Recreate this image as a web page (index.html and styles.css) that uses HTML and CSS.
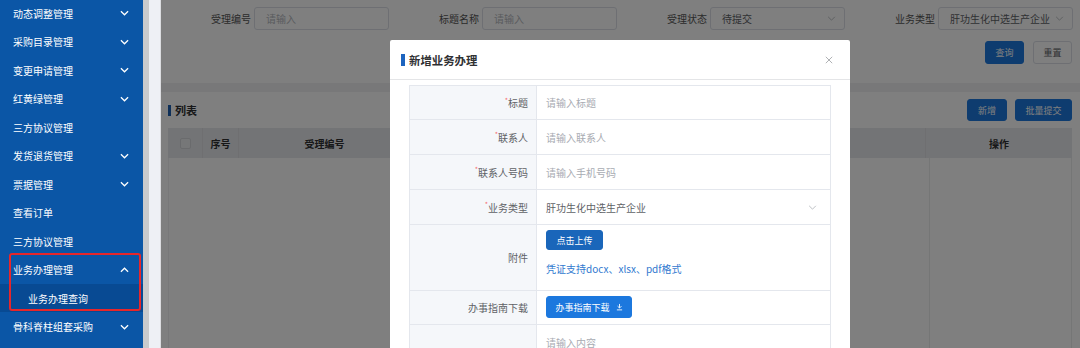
FILE: index.html
```html
<!DOCTYPE html>
<html lang="zh-CN">
<head>
    <meta charset="UTF-8">
    <meta name="viewport" content="width=device-width, initial-scale=1.0">
    <title>业务办理查询</title>
    <link rel="stylesheet" href="styles.css">
</head>
<body>
    <div class="app">
        <!-- Sidebar -->
        <aside class="sidebar">
            <ul class="menu">
                <li class="menu-item"><span>动态调整管理</span><svg class="arrow" viewBox="0 0 10 6"><polyline points="1,1 5,5 9,1"/></svg></li>
                <li class="menu-item"><span>采购目录管理</span><svg class="arrow" viewBox="0 0 10 6"><polyline points="1,1 5,5 9,1"/></svg></li>
                <li class="menu-item"><span>变更申请管理</span><svg class="arrow" viewBox="0 0 10 6"><polyline points="1,1 5,5 9,1"/></svg></li>
                <li class="menu-item"><span>红黄绿管理</span><svg class="arrow" viewBox="0 0 10 6"><polyline points="1,1 5,5 9,1"/></svg></li>
                <li class="menu-item"><span>三方协议管理</span></li>
                <li class="menu-item"><span>发货退货管理</span><svg class="arrow" viewBox="0 0 10 6"><polyline points="1,1 5,5 9,1"/></svg></li>
                <li class="menu-item"><span>票据管理</span><svg class="arrow" viewBox="0 0 10 6"><polyline points="1,1 5,5 9,1"/></svg></li>
                <li class="menu-item"><span>查看订单</span></li>
                <li class="menu-item"><span>三方协议管理</span></li>
                <li class="menu-item"><span>业务办理管理</span><svg class="arrow" viewBox="0 0 10 6"><polyline points="1,5 5,1 9,5"/></svg></li>
                <li class="menu-item sub"><span>业务办理查询</span></li>
                <li class="menu-item"><span>骨科脊柱组套采购</span><svg class="arrow" viewBox="0 0 10 6"><polyline points="1,1 5,5 9,1"/></svg></li>
            </ul>
            <!-- annotation box -->
            <div class="mark"></div>
        </aside>
        <div class="scroll-track"></div>
        <div class="gutter"></div>

        <!-- Main -->
        <main class="main">
            <section class="search-card">
                <div class="search-grid">
                    <div class="form-item">
                        <label>受理编号</label>
                        <div class="input placeholder">请输入</div>
                    </div>
                    <div class="form-item">
                        <label>标题名称</label>
                        <div class="input placeholder">请输入</div>
                    </div>
                    <div class="form-item">
                        <label>受理状态</label>
                        <div class="input select"><span>待提交</span><svg class="caret" viewBox="0 0 10 6"><polyline points="1,1 5,5 9,1"/></svg></div>
                    </div>
                    <div class="form-item">
                        <label>业务类型</label>
                        <div class="input select"><span>肝功生化中选生产企业</span><svg class="caret" viewBox="0 0 10 6"><polyline points="1,1 5,5 9,1"/></svg></div>
                    </div>
                </div>
                <div class="search-actions">
                    <button class="btn primary">查询</button>
                    <button class="btn">重置</button>
                </div>
            </section>

            <section class="list-card">
                <div class="list-head">
                    <h3 class="block-title">列表</h3>
                    <div class="list-actions">
                        <button class="btn primary tall">新增</button>
                        <button class="btn primary tall wide">批量提交</button>
                    </div>
                </div>
                <div class="table">
                    <div class="thead">
                        <div class="th"><span class="checkbox"></span></div>
                        <div class="th">序号</div>
                        <div class="th">受理编号</div>
                        <div class="th">标题名称</div>
                        <div class="th">受理状态</div>
                        <div class="th last">操作</div>
                    </div>
                    <div class="tbody">
                        <div class="td-fill"></div>
                        <div class="td-fixed"></div>
                    </div>
                </div>
            </section>

            <!-- Modal -->
            <div class="mask">
                <div class="dialog">
                    <div class="dialog-header">
                        <span class="dialog-title">新增业务办理</span>
                        <svg class="close" viewBox="0 0 10 10"><path d="M1 1L9 9M9 1L1 9"/></svg>
                    </div>
                    <div class="dialog-body">
                        <div class="form-table">
                            <div class="form-row">
                                <div class="cell-label"><i>*</i>标题</div>
                                <div class="cell-value placeholder">请输入标题</div>
                            </div>
                            <div class="form-row">
                                <div class="cell-label"><i>*</i>联系人</div>
                                <div class="cell-value placeholder">请输入联系人</div>
                            </div>
                            <div class="form-row">
                                <div class="cell-label"><i>*</i>联系人号码</div>
                                <div class="cell-value placeholder">请输入手机号码</div>
                            </div>
                            <div class="form-row">
                                <div class="cell-label"><i>*</i>业务类型</div>
                                <div class="cell-value select-value">
                                    <span>肝功生化中选生产企业</span>
                                    <svg class="caret" viewBox="0 0 10 6"><polyline points="1,1 5,5 9,1"/></svg>
                                </div>
                            </div>
                            <div class="form-row attach">
                                <div class="cell-label">附件</div>
                                <div class="cell-value stack">
                                    <button class="btn primary small">点击上传</button>
                                    <p class="hint">凭证支持docx、xlsx、pdf格式</p>
                                </div>
                            </div>
                            <div class="form-row guide">
                                <div class="cell-label">办事指南下载</div>
                                <div class="cell-value top">
                                    <button class="btn primary guide-btn">办事指南下载
                                        <svg class="dl" viewBox="0 0 8 8"><path d="M4 0.5V5M1.8 3L4 5.2L6.2 3M1 7.3H7"/></svg>
                                    </button>
                                </div>
                            </div>
                            <div class="form-row textarea">
                                <div class="cell-label"></div>
                                <div class="cell-value placeholder">请输入内容</div>
                            </div>
                        </div>
                    </div>
                </div>
            </div>
        </main>
    </div>
</body>
</html>
```

FILE: styles.css
```css
/* Reset */
* {
    margin: 0;
    padding: 0;
    box-sizing: border-box;
}

body {
    font-family: "Noto Sans CJK SC", "Noto Sans", sans-serif;
    font-size: 10px;
    color: #606266;
    height: 348px;
    overflow: hidden;
    background: #eef0f5;
}

ul {
    list-style: none;
}

button {
    font-family: inherit;
    border: none;
    cursor: pointer;
}

.app {
    display: flex;
    height: 348px;
}

/* Sidebar */
.sidebar {
    position: relative;
    width: 143px;
    flex-shrink: 0;
    background: #0b56a6;
    overflow: hidden;
}

.menu {
    margin-top: -1.25px;
}

.menu-item {
    height: 28.5px;
    display: flex;
    align-items: center;
    justify-content: space-between;
    padding: 0 14px 0 13px;
    color: #fff;
    font-size: 10px;
}

.menu-item.sub {
    background: #084a93;
    padding-left: 28px;
}

.arrow {
    width: 9px;
    height: 6px;
    fill: none;
    stroke: #fff;
    stroke-width: 1.4;
}

.mark {
    position: absolute;
    left: 9px;
    top: 253px;
    width: 132px;
    height: 58px;
    border: 2px solid #e8262a;
    border-radius: 3px;
}

.scroll-track {
    width: 6px;
    flex-shrink: 0;
    background: #c9cacc;
}

.gutter {
    width: 11px;
    flex-shrink: 0;
    background: #eef0f5;
}

/* Main */
.main {
    position: relative;
    flex: 1;
    background: #f0f1f3;
    border-left: 1px solid #dcdde0;
    overflow: hidden;
}

.search-card {
    height: 83px;
    background: #fff;
    padding-top: 7px;
}

.search-grid {
    display: grid;
    grid-template-columns: repeat(4, 228px);
}

.form-item {
    display: flex;
    justify-content: flex-end;
    align-items: center;
}

.form-item label {
    margin-right: 3px;
    color: #555;
}

.input {
    width: 135px;
    height: 23px;
    border: 1px solid #dcdfe6;
    border-radius: 3px;
    padding: 0 11px;
    display: flex;
    align-items: center;
    color: #606266;
}

.input.placeholder {
    color: #b4b7bd;
}

.input.select {
    justify-content: space-between;
    padding-right: 8px;
}

.caret {
    width: 9px;
    height: 5px;
    fill: none;
    stroke: #b0b3b8;
    stroke-width: 1;
}

.search-actions {
    display: flex;
    justify-content: flex-end;
    gap: 9px;
    margin-top: 11px;
    padding-right: 8px;
}

.btn {
    height: 23px;
    width: 39px;
    border: 1px solid #dcdfe6;
    border-radius: 3px;
    background: #fff;
    color: #606266;
    font-size: 9px;
}

.btn.primary {
    background: #1c78de;
    border-color: #1c78de;
    color: #fff;
}

.btn.tall {
    height: 22px;
    width: 40px;
}

.btn.wide {
    width: 57px;
}

/* List card */
.list-card {
    margin-top: 9px;
    background: #fff;
    padding: 7px 8px 0 7px;
    height: 300px;
}

.list-head {
    display: flex;
    justify-content: space-between;
    align-items: center;
}

.block-title {
    display: flex;
    align-items: center;
    font-size: 11px;
    font-weight: bold;
    color: #303133;
}

.block-title::before {
    content: "";
    width: 3px;
    height: 11px;
    background: #1c5fb0;
    margin-right: 4px;
}

.list-actions {
    display: flex;
    gap: 8px;
}

.table {
    margin-top: 7px;
}

.thead {
    display: grid;
    grid-template-columns: 35px 36px 172px 1fr 1fr 146px;
    height: 30px;
    background: #e7e9ec;
}

.th {
    display: flex;
    align-items: center;
    justify-content: center;
    border-right: 1px solid #dedfe2;
    font-weight: bold;
    color: #303133;
}

.th.last {
    border-right: none;
}

.checkbox {
    width: 11px;
    height: 11px;
    border: 1px solid #d4d6da;
    border-radius: 2px;
    background: #eceef1;
}

.tbody {
    display: flex;
    height: 200px;
    border-left: 1px solid #f0f0f2;
}

.td-fill {
    flex: 1;
}

.td-fixed {
    width: 143px;
    border-left: 1px solid #ebeced;
    border-right: 1px solid #ebeced;
}

/* Modal */
.mask {
    position: absolute;
    top: 0;
    left: -1px;
    right: 0;
    bottom: 0;
    background: rgba(0, 0, 0, 0.5);
    display: flex;
    justify-content: center;
    align-items: flex-start;
}

.dialog {
    width: 460px;
    margin-top: 40px;
    height: 400px;
    background: #fff;
    border-radius: 2px;
}

.dialog-header {
    height: 40px;
    border-bottom: 1px solid #e4e5e7;
    display: flex;
    align-items: center;
    justify-content: space-between;
    padding: 0 17px 0 11px;
}

.dialog-title {
    display: flex;
    align-items: center;
    font-size: 11.4px;
    font-weight: bold;
    color: #303133;
}

.dialog-title::before {
    content: "";
    width: 4px;
    height: 12px;
    background: #1d64bf;
    margin-right: 4px;
}

.close {
    width: 8px;
    height: 8px;
    stroke: #a4a6aa;
    stroke-width: 1.1;
    fill: none;
}

.dialog-body {
    padding: 5px 19px;
}

.form-table {
    border: 1px solid #e4e7ed;
    border-bottom: none;
}

.form-row {
    display: grid;
    grid-template-columns: 127px 1fr;
    height: 35px;
    border-bottom: 1px solid #e4e7ed;
}

.form-row:first-child {
    height: 34px;
}

.form-row.attach {
    height: 66px;
}

.form-row.guide {
    height: 34px;
}

.form-row.textarea {
    height: 60px;
}

.cell-label {
    background: #f5f7fa;
    border-right: 1px solid #e4e7ed;
    display: flex;
    align-items: center;
    justify-content: flex-end;
    padding-right: 8px;
    color: #606266;
}

.cell-label i {
    font-style: normal;
    color: #f56c6c;
    font-size: 7px;
    line-height: 1;
    margin-top: -5px;
}

.cell-value {
    display: flex;
    align-items: center;
    padding-left: 9px;
    color: #606266;
}

.cell-value.placeholder {
    color: #a8abb2;
}

.form-row.textarea .cell-value {
    align-items: flex-start;
    padding-top: 10px;
}

.select-value {
    justify-content: space-between;
    padding-right: 13px;
}

.stack {
    flex-direction: column;
    align-items: flex-start;
    padding-top: 5px;
}

.top {
    align-items: flex-start;
    padding-top: 5px;
}

.btn.small {
    width: 57px;
    height: 20px;
    background: #1a66ba;
    border-color: #1a66ba;
}

.hint {
    margin-top: 11px;
    color: #3179cf;
    font-size: 10px;
}

.guide-btn {
    width: 86px;
    height: 22px;
    background: #1a66ba;
    border-color: #1a66ba;
    display: flex;
    align-items: center;
    justify-content: center;
    gap: 6px;
}

.dl {
    width: 7px;
    height: 8px;
    fill: none;
    stroke: #fff;
    stroke-width: 1;
}
```
